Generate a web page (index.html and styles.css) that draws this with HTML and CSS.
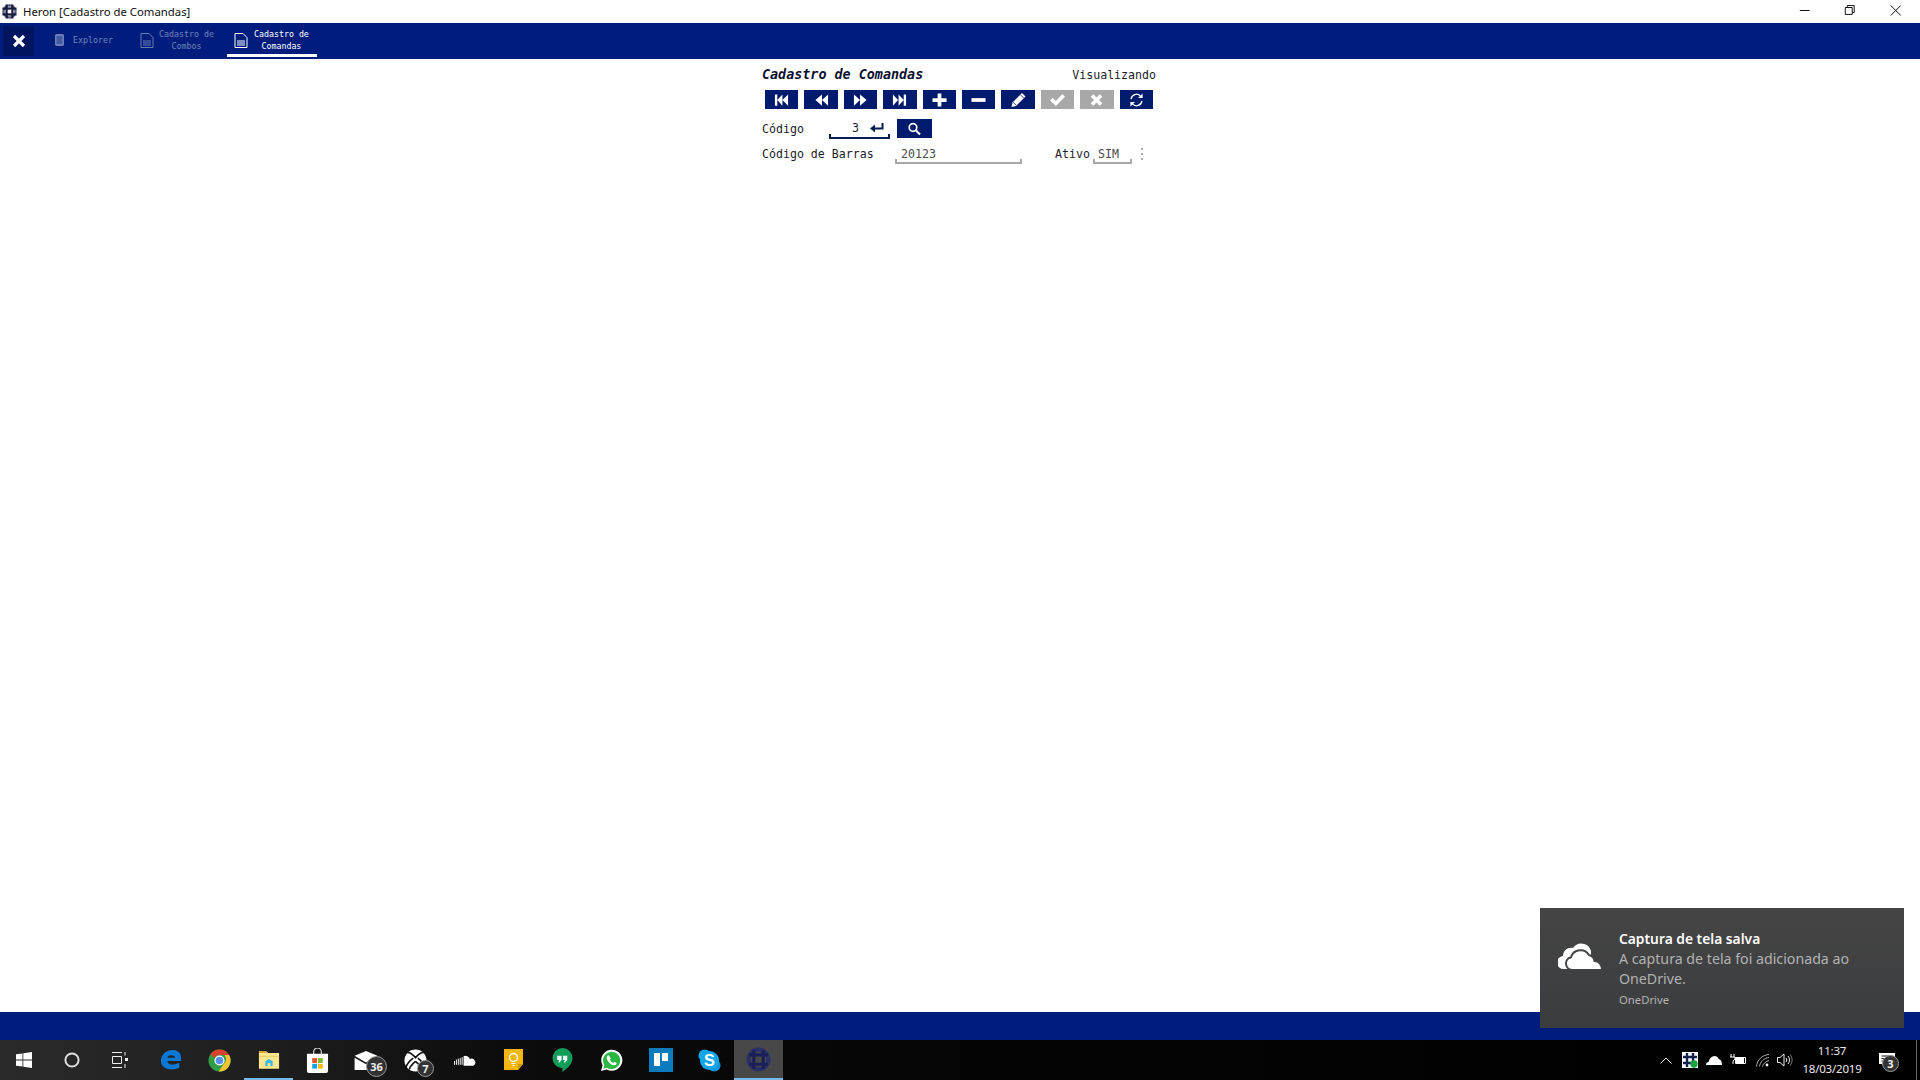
FILE: index.html
```html
<!DOCTYPE html>
<html lang="pt-BR">
<head>
<meta charset="utf-8">
<title>Heron [Cadastro de Comandas]</title>
<link rel="stylesheet" href="styles.css">
</head>
<body>
<header class="titlebar">
  <svg class="app-icon" viewBox="0 0 16 16"><circle cx="8" cy="8" r="6.500" fill="#d8dae4" stroke="#565b7c" stroke-width="2.400"/><path d="M5 .5v15M11 .5v15M.5 5h15M.5 11h15" stroke="#1a1e3e" stroke-width="2.400"/><rect x="6.200" y="6.200" width="3.600" height="3.600" fill="#fff"/></svg>
  <span class="app-title">Heron [Cadastro de Comandas]</span>
  <div class="win-controls">
    <svg class="win-btn" viewBox="0 0 46 20"><path d="M18 10.500h10" stroke="#111" fill="none"/></svg>
    <svg class="win-btn" viewBox="0 0 46 20"><path d="M18.500 7.500h7v7h-7zM20.500 7.500v-2h7v7h-2" stroke="#111" fill="none"/></svg>
    <svg class="win-btn" viewBox="0 0 46 20"><path d="M18 5.500l10 10M28 5.500l-10 10" stroke="#111" fill="none"/></svg>
  </div>
</header>

<nav class="navbar">
  <div class="nav-close"><svg viewBox="0 0 14 14" width="14" height="14"><path d="M2 2l10 10M12 2L2 12" stroke="#fff" stroke-width="3.200"/></svg></div>
  <div class="tab tab-one tab-off">
    <svg class="tab-db" viewBox="0 0 9 12"><path d="M0 1l1-1h7l1 1v10l-1 1H1l-1-1z" fill="#fff"/><path d="M1.500 3h6M1.500 5h6M1.500 7h6M1.500 9h6" stroke="#001d7e" stroke-width=".7"/></svg>
    <span class="tab-text">Explorer</span>
  </div>
  <div class="tab tab-two tab-off">
    <svg class="tab-doc" viewBox="0 0 14 15"><path d="M1 .5h8l4 4v10H1z" fill="none" stroke="#fff"/><path d="M3 8h8M3 10h8M3 12h8" stroke="#fff"/></svg>
    <span class="tab-text">Cadastro de<br>Combos</span>
  </div>
  <div class="tab tab-on">
    <svg class="tab-doc" viewBox="0 0 14 15"><path d="M1 .5h8l4 4v10H1z" fill="none" stroke="#fff"/><path d="M3 8h8M3 10h8M3 12h8" stroke="#fff"/></svg>
    <span class="tab-text">Cadastro de<br>Comandas</span>
  </div>
</nav>

<main class="content">
  <section class="form">
    <div class="form-head">
      <h1 class="form-title">Cadastro de Comandas</h1>
      <span class="form-state">Visualizando</span>
    </div>
    <div class="toolbar">
      <button class="tool"><svg viewBox="0 0 16 12"><path d="M1 0h2.500v12H1zM9 0v12L3.500 6zM15 0v12L9 6z" fill="#fff"/></svg></button>
      <button class="tool"><svg viewBox="0 0 16 12"><path d="M8.500 0v12L1.500 6zM15 0v12L8.500 6z" fill="#fff"/></svg></button>
      <button class="tool"><svg viewBox="0 0 16 12"><path d="M1 0v12l6.500-6zM7.500 0v12L14.500 6z" fill="#fff"/></svg></button>
      <button class="tool"><svg viewBox="0 0 16 12"><path d="M15 0h-2.500v12H15zM7 0v12l5.500-6zM1 0v12l5.500-6z" fill="#fff"/></svg></button>
      <button class="tool"><svg viewBox="0 0 16 14"><path d="M6 0h4v5h5.500v4H10v5H6V9H.5V5H6z" fill="#fff"/></svg></button>
      <button class="tool"><svg viewBox="0 0 16 14"><path d="M.5 5h15v4H.5z" fill="#fff"/></svg></button>
      <button class="tool"><svg viewBox="0 0 14 14"><path d="M10.500 0l3.500 3.500-9.500 9.500L0 14l1-4.500z" fill="#fff"/><path d="M1.700 9.300l3 3M9 1.800l3.200 3.200" stroke="#001a6e" stroke-width=".8"/></svg></button>
      <button class="tool tool-off"><svg viewBox="0 0 14 12"><path d="M0 6.500L2.500 4l3 3L11.500.5 14 3 5.500 11.500z" fill="#fff"/></svg></button>
      <button class="tool tool-off"><svg viewBox="0 0 14 14"><path d="M2.500 2.500l9 9M11.500 2.500l-9 9" stroke="#fff" stroke-width="3.600"/></svg></button>
      <button class="tool"><svg viewBox="0 0 16 16"><path d="M1.800 7A6.200 6.200 0 0 1 12.600 3.500M14.200 9A6.200 6.200 0 0 1 3.400 12.500" fill="none" stroke="#fff" stroke-width="1.500"/><path d="M15 .5v5.300H9.700zM1 15.500v-5.300h5.300z" fill="#fff"/></svg></button>
    </div>
    <div class="row row-code">
      <label class="label label-code">Código</label>
      <div class="field field-code">
        <span class="field-value">3</span>
        <svg class="enter" viewBox="0 0 14 10"><path d="M12.500 0v5.500H3" fill="none" stroke="#0a1b4f" stroke-width="2"/><path d="M0 5.500L5 1.500v8z" fill="#0a1b4f"/></svg>
      </div>
      <button class="tool tool-search"><svg viewBox="0 0 14 14"><circle cx="5.500" cy="5.500" r="3.800" fill="none" stroke="#fff" stroke-width="1.700"/><path d="M8.500 8.500l4 4" stroke="#fff" stroke-width="2.200"/></svg></button>
    </div>
    <div class="row row-bar">
      <label class="label label-bar">Código de Barras</label>
      <div class="field field-bar">20123</div>
      <label class="label label-ativo">Ativo</label>
      <div class="field field-sim">SIM</div>
      <svg class="dots" viewBox="0 0 4 12"><path d="M1 0h2v2H1zM1 5h2v2H1zM1 10h2v2H1z" fill="#aaa"/></svg>
    </div>
  </section>
</main>

<footer class="statusbar"></footer>

<div class="taskbar">
  <div class="sys-btn"><svg viewBox="0 0 16 16" width="16" height="16"><path d="M0 2.300l6.500-.9v6.200H0zM7.300 1.300L16 0v7.600H7.300zM0 8.400h6.500v6.200L0 13.700zM7.300 8.400H16V16l-8.700-1.200z" fill="#fff"/></svg></div>
  <div class="sys-btn"><svg viewBox="0 0 16 16" width="16" height="16"><circle cx="8" cy="8" r="6.600" fill="none" stroke="#ddd" stroke-width="2"/></svg></div>
  <div class="sys-btn"><svg viewBox="0 0 16 16" width="16" height="16"><path d="M0 .5h10M0 15.500h10M.5 4.500h9v7h-9zM13 0v3.500M13 12v4" stroke="#eee" fill="none"/><path d="M13 6h3v3h-3z" fill="#eee"/></svg></div>
  <div class="app"><svg viewBox="0 0 24 24" width="22" height="24"><path d="M1 13C1 6 7 1 14 1c5 0 9 3 9 8.500V13H8c.500 4 6 5.500 13 2v5.500c-9 4-20 1-20-7.500zM8 9.500h8.500C16 6 9 6 8 9.500z" fill="#0a78d4"/></svg></div>
  <div class="app"><svg viewBox="0 0 24 24" width="23" height="23"><circle cx="12" cy="12" r="11.500" fill="#2f9e44"/><path d="M12 .5a11.500 11.500 0 0 1 10 5.800H12a6 6 0 0 0-5.300 3L2.500 5.500A11.500 11.500 0 0 1 12 .5z" fill="#d9402e"/><path d="M22 6.300A11.500 11.500 0 0 1 11 23.500l5.500-8a6 6 0 0 0 .5-9.200z" fill="#f3c431"/><circle cx="12" cy="12" r="5.300" fill="#fff"/><circle cx="12" cy="12" r="4" fill="#5a8fee"/></svg></div>
  <div class="app app-active"><svg viewBox="0 0 24 20" width="22" height="19"><path d="M1 1h8l2 2h12v17H1z" fill="#fde68f"/><path d="M1 1h8l1 2H1z" fill="#d4a83a"/><path d="M1 6h22v1H1z" fill="#e8c962"/><path d="M8 17v-5l4-2.500 4 2.500v5z" fill="#3db4e6"/><path d="M10.500 17v-3h3v3z" fill="#fde68f"/></svg></div>
  <div class="app"><svg viewBox="0 0 24 26" width="23" height="25"><path d="M8 7V4a4 4 0 0 1 8 0v3" fill="none" stroke="#ddd" stroke-width="1.200"/><path d="M1 6h22v18a2 2 0 0 1-2 2H3a2 2 0 0 1-2-2z" fill="#fff"/><path d="M6.500 10.500h5v5h-5z" fill="#e8502d"/><path d="M12.500 10.500h5v5h-5z" fill="#7cb82a"/><path d="M6.500 16.500h5v5h-5z" fill="#0aa3e8"/><path d="M12.500 16.500h5v5h-5z" fill="#fbb90a"/></svg></div>
  <div class="app app-badged">
    <svg class="mail-icon" viewBox="0 0 24 20" width="24" height="19"><path d="M0 5L12 0l12 5-12 7z" fill="#fff"/><path d="M0 7l12 7 12-7v13H0z" fill="#fff"/></svg>
    <span class="badge badge-mail">36</span>
  </div>
  <div class="app app-badged">
    <svg class="xbox-icon" viewBox="0 0 24 24" width="23" height="23"><circle cx="12" cy="12" r="11.500" fill="#fff"/><path d="M3.500 3.500c3 0 6 2.500 8.500 5.500 2.500-3 5.500-5.500 8.500-5.500M2 19c1-3.500 5-7.500 7.500-9.500M22 19c-1-3.500-5-7.500-7.500-9.500M12 13c-3 2.500-6 5.500-6.500 8.500M12 13c3 2.500 6 5.500 6.500 8.500" stroke="#111" stroke-width="1.700" fill="none"/></svg>
    <span class="badge badge-xbox">7</span>
  </div>
  <div class="app"><svg class="sc-icon" viewBox="0 0 24 11" width="23" height="11"><path d="M.5 6v4M2.500 4.500V10M4.500 3.500V10M6.500 3V10M8.500 2V10" stroke="#fff" fill="none"/><path d="M10 1a5 5 0 0 1 6.500 3A3 3 0 1 1 20 11H10z" fill="#fff"/></svg></div>
  <div class="app"><svg viewBox="0 0 19 22" width="19" height="22"><path d="M0 0h19v15l-5 6H0z" fill="#f5b70f"/><path d="M14 21v-6h5z" fill="#cf9a08"/><circle cx="9.500" cy="8.500" r="4" fill="none" stroke="#fff" stroke-width="1.300"/><path d="M7.500 14.500h4M8.500 16.500h2" stroke="#fff" stroke-width="1.200"/></svg></div>
  <div class="app"><svg viewBox="0 0 22 26" width="21" height="25"><path d="M11 0a10.500 10.500 0 0 1 10.500 10.500C21.500 16 17 21 11 25v-4A10.500 10.500 0 0 1 11 0z" fill="#0f9d58"/><path d="M5.500 8h4.500v4.500l-2.200 2.500h-1.300l1-2.500h-2zM11.500 8h4.500v4.500L13.800 15h-1.300l1-2.500h-2z" fill="#fff"/></svg></div>
  <div class="app"><svg viewBox="0 0 24 24" width="23" height="23"><path d="M1 23l1.700-6A11 11 0 1 1 7 21.300z" fill="#fff"/><path d="M3.500 20.500l1-3.800A9 9 0 1 1 7.300 19.500z" fill="#2bb741"/><path d="M9 6.500c-1 0-2 1-2 2.500 0 3 4 7.500 7.500 8 1.800.200 3-1 3-2.300l-2.500-1.500-1.200 1.300c-1.500-.500-3-2.200-3.500-3.500l1-1.200z" fill="#fff"/></svg></div>
  <div class="app"><svg viewBox="0 0 24 24" width="24" height="24"><path d="M0 0h24v24H0z" fill="#0a7bbd"/><path d="M5 5h6v13H5zM13 5h6v8h-6z" fill="#fff"/></svg></div>
  <div class="app"><svg viewBox="0 0 24 24" width="23" height="23"><circle cx="7" cy="7" r="6.500" fill="#12a5e8"/><circle cx="17" cy="17" r="6.500" fill="#0a93da"/><circle cx="12" cy="12" r="10" fill="#12a5e8"/><text class="skype-s" x="12" y="18">S</text></svg></div>
  <div class="app app-running"><svg viewBox="0 0 24 24" width="25" height="25"><circle cx="12" cy="12" r="9.500" fill="none" stroke="#2a3068" stroke-width="4"/><path d="M7.500 3v18M16.500 3v18M3 7.500h18M3 16.500h18" stroke="#1a1f58" stroke-width="3"/></svg></div>
  <div class="tray">
    <svg class="tray-chevron" viewBox="0 0 12 7" width="12" height="7"><path d="M.5 6.500L6 1l5.500 5.500" stroke="#eee" fill="none"/></svg>
    <svg class="tray-heron" viewBox="0 0 16 16" width="16" height="16"><path d="M0 0h16v16H0z" fill="#fff"/><path d="M5 1v14M11 1v14M1 5h14M1 11h14" stroke="#14204e" stroke-width="2.400"/><circle cx="12" cy="12" r="3.700" fill="#19a341"/></svg>
    <svg class="tray-cloud" viewBox="0 0 16 9" width="16" height="9"><path d="M0 9c0-2 1-3 2.500-3C3.500 2 6 0 8.500 0c2 0 3.500 1 4.200 3 1.800 0 3.300 2 3.300 6z" fill="#fff"/></svg>
    <svg class="tray-batt" viewBox="0 0 18 12" width="18" height="12"><path d="M2 0v3M5 0v3M1 3h5v2L4 7v3" stroke="#fff" fill="none"/><path d="M6.500 3.500h10v6h-10z" fill="none" stroke="#fff"/><path d="M6 4h9v5H6z" fill="#fff"/></svg>
    <svg class="tray-wifi" viewBox="0 0 14 13" width="14" height="13"><path d="M.5 12.500C1 6 6 1 13 .5M3.500 12.500C4 8 8 4 13 3.500M6.500 12.500C7 10 10 7 13 6.500" stroke="#aaa" fill="none"/><circle cx="11" cy="11" r="1.400" fill="#fff"/></svg>
    <svg class="tray-vol" viewBox="0 0 16 14" width="16" height="14"><path d="M.5 4.500H3L7 1v12L3 9.500H.5z" stroke="#eee" fill="none"/><path d="M9 5a3 3 0 0 1 0 4M11 3a6 6 0 0 1 0 8" stroke="#eee" fill="none"/><path d="M13 1.500a8 8 0 0 1 0 11" stroke="#777" fill="none"/></svg>
    <div class="clock"><span>11:37</span><span>18/03/2019</span></div>
    <div class="notif">
      <svg viewBox="0 0 16 15" width="16" height="15"><path d="M0 0h16v11h-6l-3 4v-4H0z" fill="#fff"/><path d="M2.500 3h11M2.500 5.500h11M2.500 8h7" stroke="#111"/></svg>
      <span class="badge badge-notif">3</span>
    </div>
    <div class="show-desktop"></div>
  </div>
</div>

<aside class="toast">
  <svg class="toast-icon" viewBox="0 0 44 28" width="44" height="28"><path d="M6 27a6 6 0 0 1-1-13A8 8 0 0 1 15 6 10 10 0 0 1 33 9v18z" fill="#fff"/><path d="M14 28a6.500 6.500 0 0 1-1-12.800A10 10 0 0 1 31 13a7.500 7.500 0 0 1 5.500 6C41 19 44 23 44 28z" fill="#fff" stroke="#454545" stroke-width="2"/></svg>
  <div class="toast-body">
    <div class="toast-title">Captura de tela salva</div>
    <div class="toast-text">A captura de tela foi adicionada ao OneDrive.</div>
    <div class="toast-source">OneDrive</div>
  </div>
</aside>
</body>
</html>
```

FILE: styles.css
```css
* { box-sizing: border-box; }
html, body { height: 100%; }
body {
  margin: 0;
  display: flex;
  flex-direction: column;
  height: 100vh;
  overflow: hidden;
  background: #fff;
  font-family: "Noto Sans", sans-serif;
  color: #111;
}

/* title bar */
.titlebar { flex: 0 0 23px; display: flex; align-items: center; padding-left: 2px; }
.app-icon { width: 15px; height: 15px; margin-right: 6px; }
.app-title { font-size: 11.35px; color: #111; }
.win-controls { margin-left: auto; display: flex; padding-right: 2px; }
.win-btn { width: 45.500px; height: 20px; margin-bottom: 3px; }

/* nav */
.navbar { flex: 0 0 36px; background: #001d7e; display: flex; font-family: "DejaVu Sans Mono", monospace; color: #fff; }
.nav-close { width: 31px; margin: 3px 13px 3px 3px; background: #00155f; display: flex; align-items: center; justify-content: center; }
.tab { display: flex; align-items: center; padding: 3px 8px 0; height: 34px; border-bottom: 3px solid transparent; margin-right: 4px; }
.tab-off { opacity: .42; }
.tab-on { border-bottom-color: #fff; margin-left: 1px; padding-left: 7px; }
.tab-one { margin-right: 10px; }
.tab-two { padding-left: 9px; }
.tab-two .tab-doc { margin-right: 5px; }
.tab-db { width: 9px; height: 12px; margin-right: 9px; }
.tab-doc { width: 14px; height: 15px; margin-right: 6px; }
.tab-text { font-size: 8.3px; line-height: 12px; text-align: center; }

/* form */
.content { flex: 1; display: flex; justify-content: center; }
.form { width: 394px; margin-right: 2px; font-family: "DejaVu Sans Mono", monospace; font-size: 11.6px; color: #1c1c2a; }
.form-head { display: flex; justify-content: space-between; align-items: center; height: 15px; margin-top: 8px; }
.form-title { margin: 0; font-size: 13.4px; font-weight: bold; font-style: italic; color: #0a0f30; }
.toolbar { display: flex; gap: 6px; padding-left: 3px; margin-top: 8px; }
.tool { width: 33.400px; height: 19px; padding: 0; border: 0; background: #001a6e; display: flex; align-items: center; justify-content: center; }
.tool svg { width: 15px; height: 14px; }
.tool-off { background: #a8a8a8; }
.row { display: flex; align-items: center; }
.row-code { margin-top: 10px; height: 19px; }
.row-bar { margin-top: 6px; height: 20px; }
.label-code { width: 67px; }
.label-bar { width: 133px; }
.label-ativo { margin-left: 33px; width: 38px; }
.field { position: relative; height: 20px; line-height: 20px; border-bottom: 2px solid #a8a8a8; }
.field::after { content: ""; position: absolute; left: 0; right: 0; bottom: 0; height: 3px; border: solid #a8a8a8; border-width: 0 2px; }
.field-code { width: 61px; border-bottom-color: #0a1b4f; display: flex; align-items: center; }
.field-code::after { border-color: #0a1b4f; }
.field-value { margin-left: 23px; }
.enter { width: 14px; height: 10px; margin-left: 11px; }
.tool-search { width: 35px; margin-left: 7px; }
.field-bar { width: 127px; padding-left: 6px; color: #4a4a4a; }
.field-sim { width: 39px; padding-left: 5px; color: #4a4a4a; }
.dots { width: 4px; height: 12px; margin-left: 8px; }

/* status and taskbar */
.statusbar { flex: 0 0 28px; background: #001d7e; }
.taskbar { flex: 0 0 40px; display: flex; align-items: center; background: linear-gradient(90deg, #2a2a2a 0, #1c1c1c 300px, #0c0c0c 500px, #050505 900px, #000 100%); }
.sys-btn { width: 48px; height: 40px; display: flex; align-items: center; justify-content: center; }
.sys-btn:nth-child(3) { margin-right: 2px; }
.app { position: relative; width: 49px; height: 40px; display: flex; align-items: center; justify-content: center; }
.app-active { border-bottom: 2px solid #76b9ed; }
.app-running { background: #484848; border-bottom: 2px solid #76b9ed; }
.mail-icon { margin-right: 2px; }
.sc-icon { margin-left: 2px; }
.badge { position: absolute; display: flex; align-items: center; justify-content: center; border-radius: 50%; background: #333; border: 1px solid #999; color: #eee; font-family: "Noto Sans", sans-serif; font-weight: bold; }
.badge-mail { width: 21px; height: 21px; font-size: 11px; right: 4px; bottom: 3px; }
.badge-xbox { width: 17px; height: 17px; font-size: 11px; right: 6px; bottom: 3px; }
.badge-notif { width: 17px; height: 17px; font-size: 11px; right: -4px; bottom: -4px; }
.skype-s { font-family: "Liberation Sans", sans-serif; font-weight: bold; font-size: 17px; fill: #fff; text-anchor: middle; }

.tray { margin-left: auto; display: flex; align-items: center; height: 40px; }
.tray-chevron { margin-right: 10px; }
.tray-heron { margin-right: 8px; }
.tray-cloud { margin-right: 7px; }
.tray-batt { margin-right: 9px; }
.tray-wifi { margin-right: 7px; }
.tray-vol { margin-right: 9.500px; }
.clock { width: 60px; display: flex; flex-direction: column; align-items: center; font-size: 11.5px; line-height: 18px; color: #e8e8e8; letter-spacing: -.2px; margin-right: 17px; white-space: nowrap; }
.notif { position: relative; width: 16px; height: 15px; margin-right: 21px; display: flex; }
.show-desktop { width: 1px; height: 40px; background: #666; margin-right: 3px; }

/* toast */
.toast { position: absolute; left: 1540px; top: 908px; width: 364px; height: 120px; padding: 22px 16px 0 18px; display: flex; align-items: flex-start; background: linear-gradient(180deg, #454545, #3b3c3e); color: #fff; }
.toast-icon { margin: 12px 17px 0 0; flex: none; }
.toast-title { font-size: 13.800px; font-weight: 600; line-height: 17px; }
.toast-text { font-size: 14.200px; line-height: 20px; color: #b2b2b2; margin-top: 2px; }
.toast-source { font-size: 11.300px; line-height: 16px; color: #b2b2b2; margin-top: 3px; }
```
